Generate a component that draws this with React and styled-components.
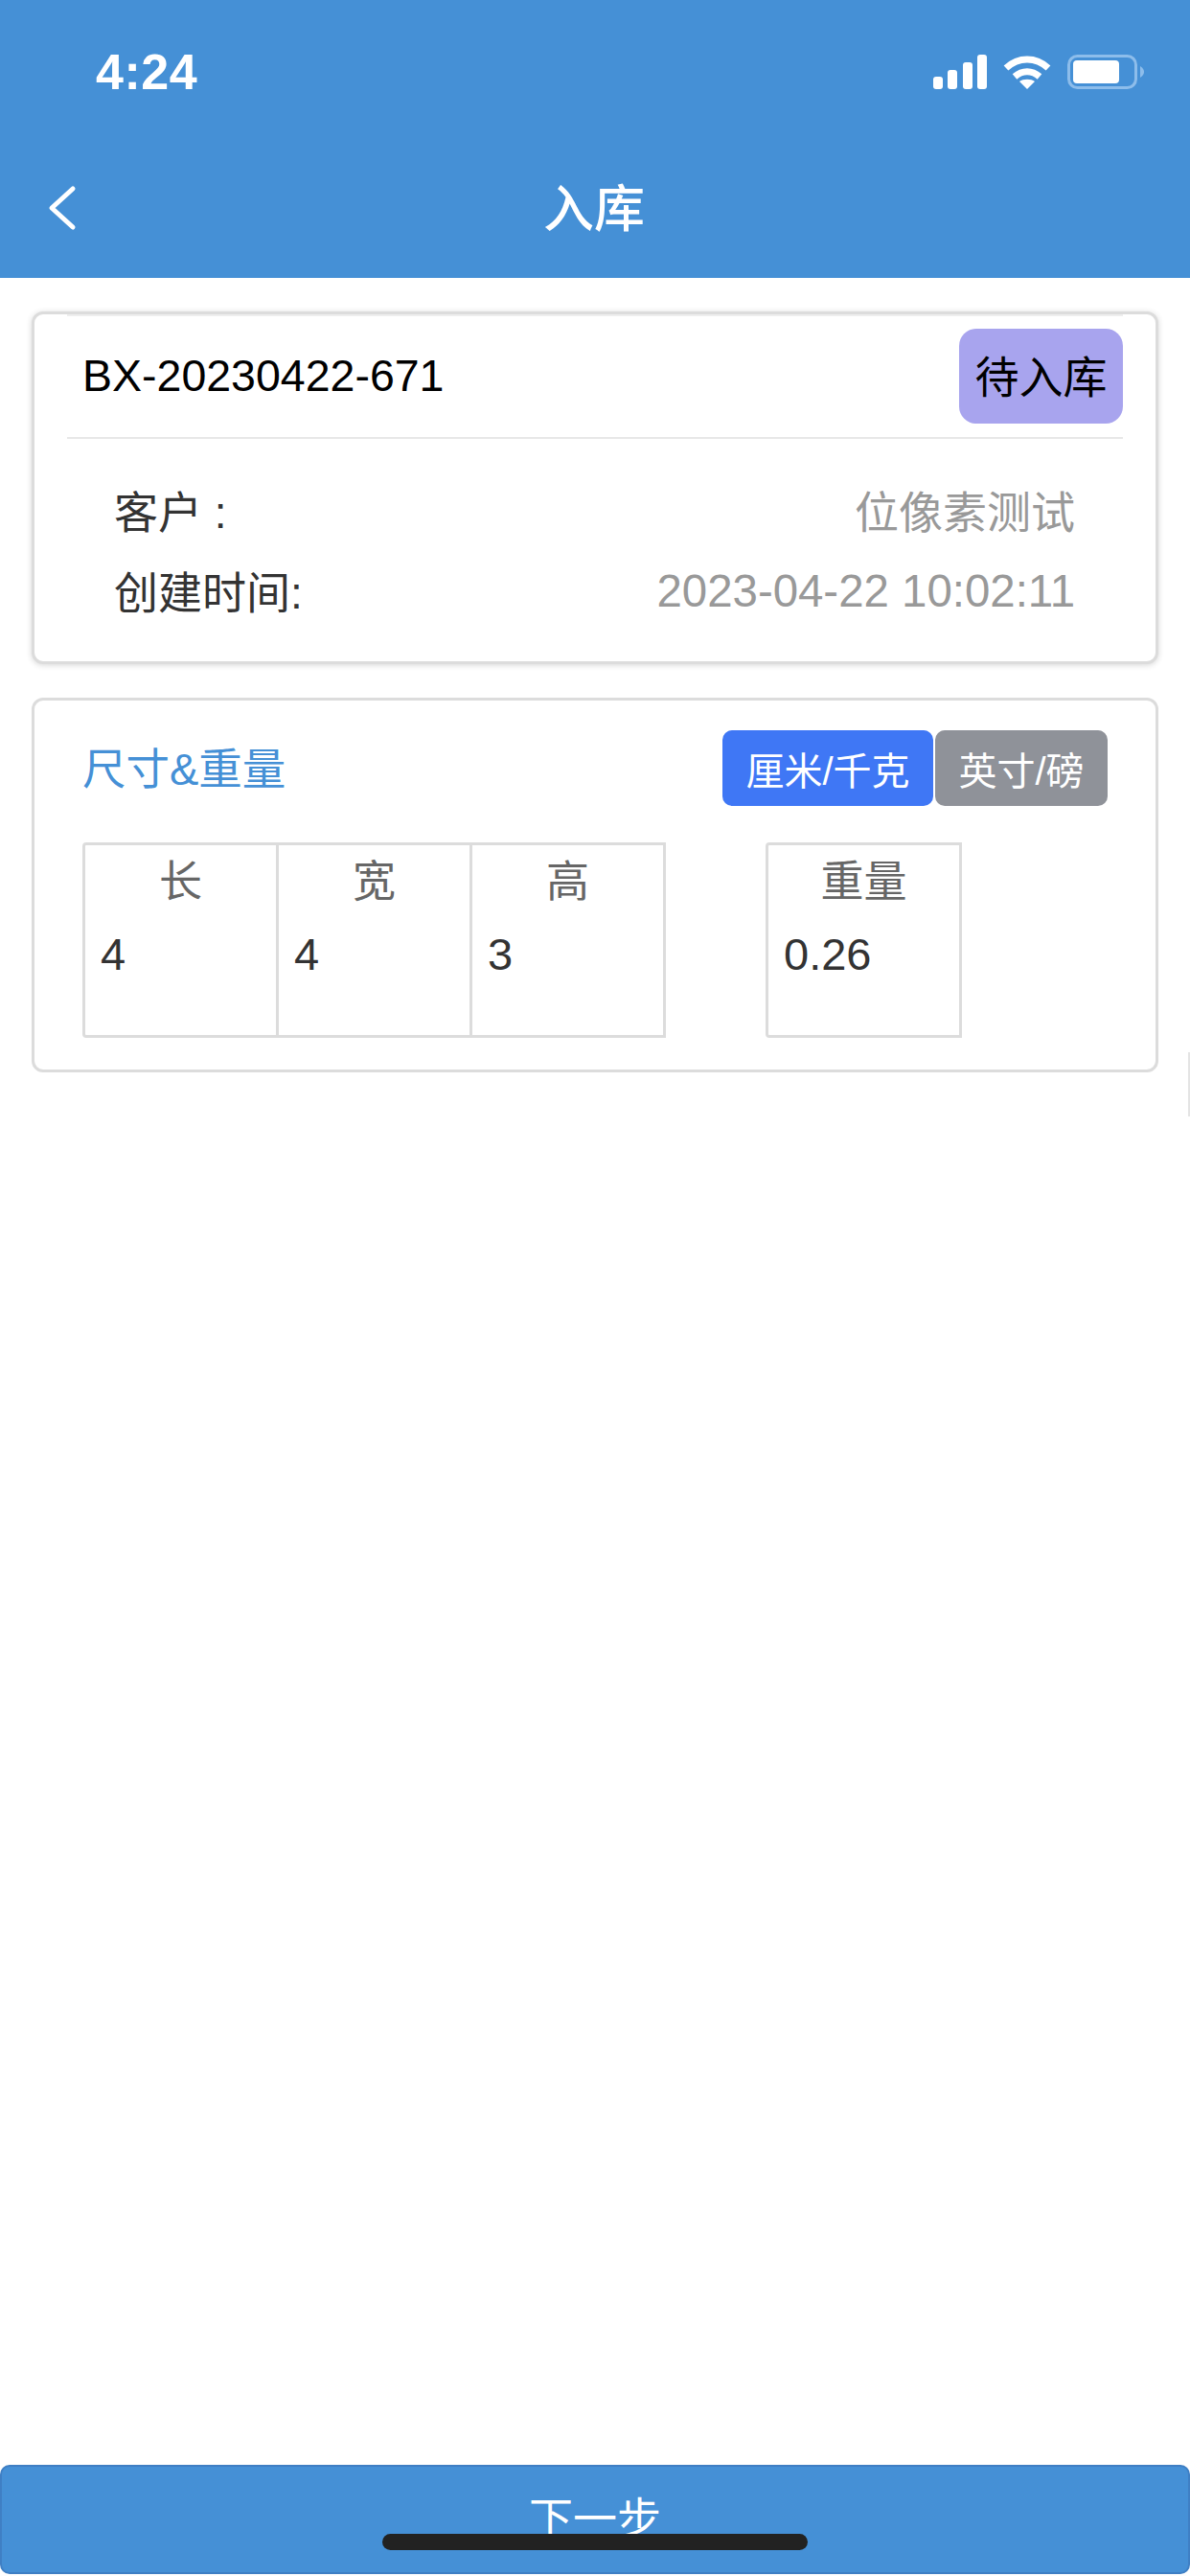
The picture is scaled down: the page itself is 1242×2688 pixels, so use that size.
import React from "react";
import styled, { createGlobalStyle } from "styled-components";

const Global = createGlobalStyle`
  html, body { margin: 0; padding: 0; background: #fff; }
  * { box-sizing: border-box; }
`;
const FONT = `"Liberation Sans", "Noto Sans CJK SC", sans-serif`;

const Page = styled.div`
  position: relative;
  width: 1242px;
  height: 2688px;
  display: flex;
  flex-direction: column;
  font-family: ${FONT};
  background: #fff;
  overflow: hidden;
`;
const TopBar = styled.header`
  background: #4590d6;
  height: 290px;
  display: flex;
  flex-direction: column;
  color: #fff;
  flex: none;
`;
const StatusBar = styled.div`
  height: 150px;
  display: flex;
  align-items: center;
  justify-content: space-between;
  padding: 0 48px 0 100px;
`;
const Time = styled.span`
  font-size: 52px;
  font-weight: 700;
  letter-spacing: 0.5px;
`;
const StatusIcons = styled.div`
  display: flex;
  align-items: center;
  gap: 17px;
`;
const Nav = styled.nav`
  height: 140px;
  display: flex;
  align-items: center;
  justify-content: center;
  position: relative;
  padding: 0 2px 13px 0;
`;
const Back = styled.svg`
  position: absolute;
  left: 48px;
  top: 43px;
`;
const NavTitle = styled.h1`
  margin: 0;
  font-size: 53px;
  font-weight: 500;
`;
const Content = styled.main`
  flex: 1;
  display: flex;
  flex-direction: column;
  gap: 35px;
  padding: 35px 33px 0;
`;
const Card = styled.section`
  border: 3px solid #dcdcdc;
  border-radius: 12px;
  background: #fff;
  box-shadow: ${(p) => (p.$raised ? "0 1px 6px rgba(0,0,0,0.16)" : "none")};
`;
const InfoCard = styled(Card)`
  height: 368px;
  padding: 0 34px;
`;
const InfoHead = styled.div`
  height: 130px;
  border-top: 2px solid #eee;
  border-bottom: 2px solid #e8e8e8;
  display: flex;
  align-items: flex-start;
  justify-content: space-between;
  padding: 13px 0 0 16px;
`;
const OrderNo = styled.span`
  font-size: 46.5px;
  line-height: 99px;
  color: #000;
`;
const Badge = styled.span`
  width: 171px;
  height: 99px;
  background: #a8a4ee;
  border-radius: 18px;
  color: #000;
  font-size: 46px;
  padding-bottom: 6px;
  display: flex;
  align-items: center;
  justify-content: center;
`;
const InfoBody = styled.div`
  padding: 33px 50px 0 49px;
`;
const InfoRow = styled.div`
  height: 84px;
  display: flex;
  align-items: center;
  justify-content: space-between;
  font-size: 46px;
`;
const InfoLabel = styled.span`
  color: #333;
  margin-top: -4px;
`;
const InfoValue = styled.span`
  color: #999;
  font-size: ${(p) => (p.$latin ? "47.4px" : "46px")};
  margin-top: ${(p) => (p.$latin ? "-2px" : "-4px")};
`;
const SizeCard = styled(Card)`
  height: 391px;
  padding: 31px 50px 0 50px;
`;
const SizeHead = styled.div`
  display: flex;
  align-items: center;
  justify-content: space-between;
  height: 79px;
`;
const SizeTitle = styled.h2`
  margin: 0 0 6px;
  font-size: 45.5px;
  font-weight: 400;
  color: #4590d6;
`;
const Toggle = styled.div`
  display: flex;
  gap: 2px;
`;
const ToggleBtn = styled.span`
  width: ${(p) => p.$w}px;
  height: 79px;
  display: flex;
  align-items: center;
  justify-content: center;
  border-radius: 10px;
  font-size: 40px;
  color: #fff;
  background: ${(p) => (p.$active ? "#3f77f5" : "#8f9299")};
`;
const Measures = styled.div`
  display: flex;
  margin-top: 38px;
  gap: 104px;
`;
const CellGroup = styled.div`
  display: flex;
`;
const Cell = styled.div`
  width: 205px;
  height: 204px;
  border: 3px solid #dcdcdc;
  margin-left: ${(p) => (p.$first ? 0 : "-3px")};
  border-radius: ${(p) => (p.$first ? "4px 0 0 4px" : 0)};
`;
const CellLabel = styled.div`
  font-size: 45px;
  line-height: 66px;
  height: 72px;
  padding-top: 6px;
  text-align: center;
  color: #666;
`;
const CellValue = styled.div`
  font-size: 47px;
  line-height: 84px;
  padding-left: 16px;
  color: #333;
`;
const Footer = styled.button`
  flex: none;
  width: 1242px;
  height: 114px;
  margin-bottom: 2px;
  background: #4590d6;
  border: 2px solid #3f7fc4;
  border-radius: 10px;
  color: #fff;
  font-family: ${FONT};
  font-size: 46px;
  padding: 17px 0 0;
  display: flex;
  justify-content: center;
  align-items: flex-start;
`;
const HomeBar = styled.div`
  position: absolute;
  left: 399px;
  top: 2644px;
  width: 444px;
  height: 17px;
  border-radius: 9px;
  background: #222;
`;
const EdgeMark = styled.div`
  position: absolute;
  right: 0;
  top: 1098px;
  width: 2px;
  height: 67px;
  background: #e4e4e4;
`;

function Signal() {
  return (
    <svg width="56" height="36" viewBox="0 0 56 36" fill="#fff">
      <rect x="0" y="23" width="10" height="13" rx="3" />
      <rect x="15" y="16" width="10" height="20" rx="3" />
      <rect x="31" y="8" width="10" height="28" rx="3" />
      <rect x="46" y="0" width="10" height="36" rx="3" />
    </svg>
  );
}
function Wifi() {
  return (
    <svg width="50" height="36" viewBox="0 0 50 36" fill="none" stroke="#fff" strokeWidth="7">
      <path d="M3 14 C16 2 34 2 47 14" />
      <path d="M12 23 C20 16 30 16 38 23" />
      <path d="M25 36 L17 28 C21 25 29 25 33 28 Z" fill="#fff" stroke="none" />
    </svg>
  );
}
function Battery() {
  return (
    <svg width="80" height="36" viewBox="0 0 80 36">
      <rect x="1.5" y="1.5" width="70" height="33" rx="9" fill="none" stroke="#8dbdeb" strokeWidth="3" />
      <rect x="6" y="6" width="48" height="24" rx="4" fill="#fff" />
      <path d="M76 12 C79 14 80 16 80 18 C80 20 79 22 76 24 Z" fill="#8dbdeb" />
    </svg>
  );
}

const dims = [
  ["长", "4"],
  ["宽", "4"],
  ["高", "3"],
];

export default function App() {
  return (
    <Page>
      <Global />
      <TopBar>
        <StatusBar>
          <Time>4:24</Time>
          <StatusIcons>
            <Signal />
            <Wifi />
            <Battery />
          </StatusIcons>
        </StatusBar>
        <Nav>
          <Back width="34" height="48" viewBox="0 0 34 48" fill="none" stroke="#fff" strokeWidth="5" strokeLinecap="round" strokeLinejoin="round">
            <path d="M28 4 L6 24 L28 44" />
          </Back>
          <NavTitle>入库</NavTitle>
        </Nav>
      </TopBar>
      <Content>
        <InfoCard $raised>
          <InfoHead>
            <OrderNo>BX-20230422-671</OrderNo>
            <Badge>待入库</Badge>
          </InfoHead>
          <InfoBody>
            <InfoRow>
              <InfoLabel>客户 :</InfoLabel>
              <InfoValue>位像素测试</InfoValue>
            </InfoRow>
            <InfoRow>
              <InfoLabel>创建时间:</InfoLabel>
              <InfoValue $latin>2023-04-22 10:02:11</InfoValue>
            </InfoRow>
          </InfoBody>
        </InfoCard>
        <SizeCard>
          <SizeHead>
            <SizeTitle>尺寸&amp;重量</SizeTitle>
            <Toggle>
              <ToggleBtn $active $w={220}>厘米/千克</ToggleBtn>
              <ToggleBtn $w={180}>英寸/磅</ToggleBtn>
            </Toggle>
          </SizeHead>
          <Measures>
            <CellGroup>
              {dims.map(([label, value], i) => (
                <Cell key={label} $first={i === 0}>
                  <CellLabel>{label}</CellLabel>
                  <CellValue>{value}</CellValue>
                </Cell>
              ))}
            </CellGroup>
            <CellGroup>
              <Cell $first>
                <CellLabel>重量</CellLabel>
                <CellValue>0.26</CellValue>
              </Cell>
            </CellGroup>
          </Measures>
        </SizeCard>
      </Content>
      <Footer>下一步</Footer>
      <EdgeMark />
      <HomeBar />
    </Page>
  );
}
